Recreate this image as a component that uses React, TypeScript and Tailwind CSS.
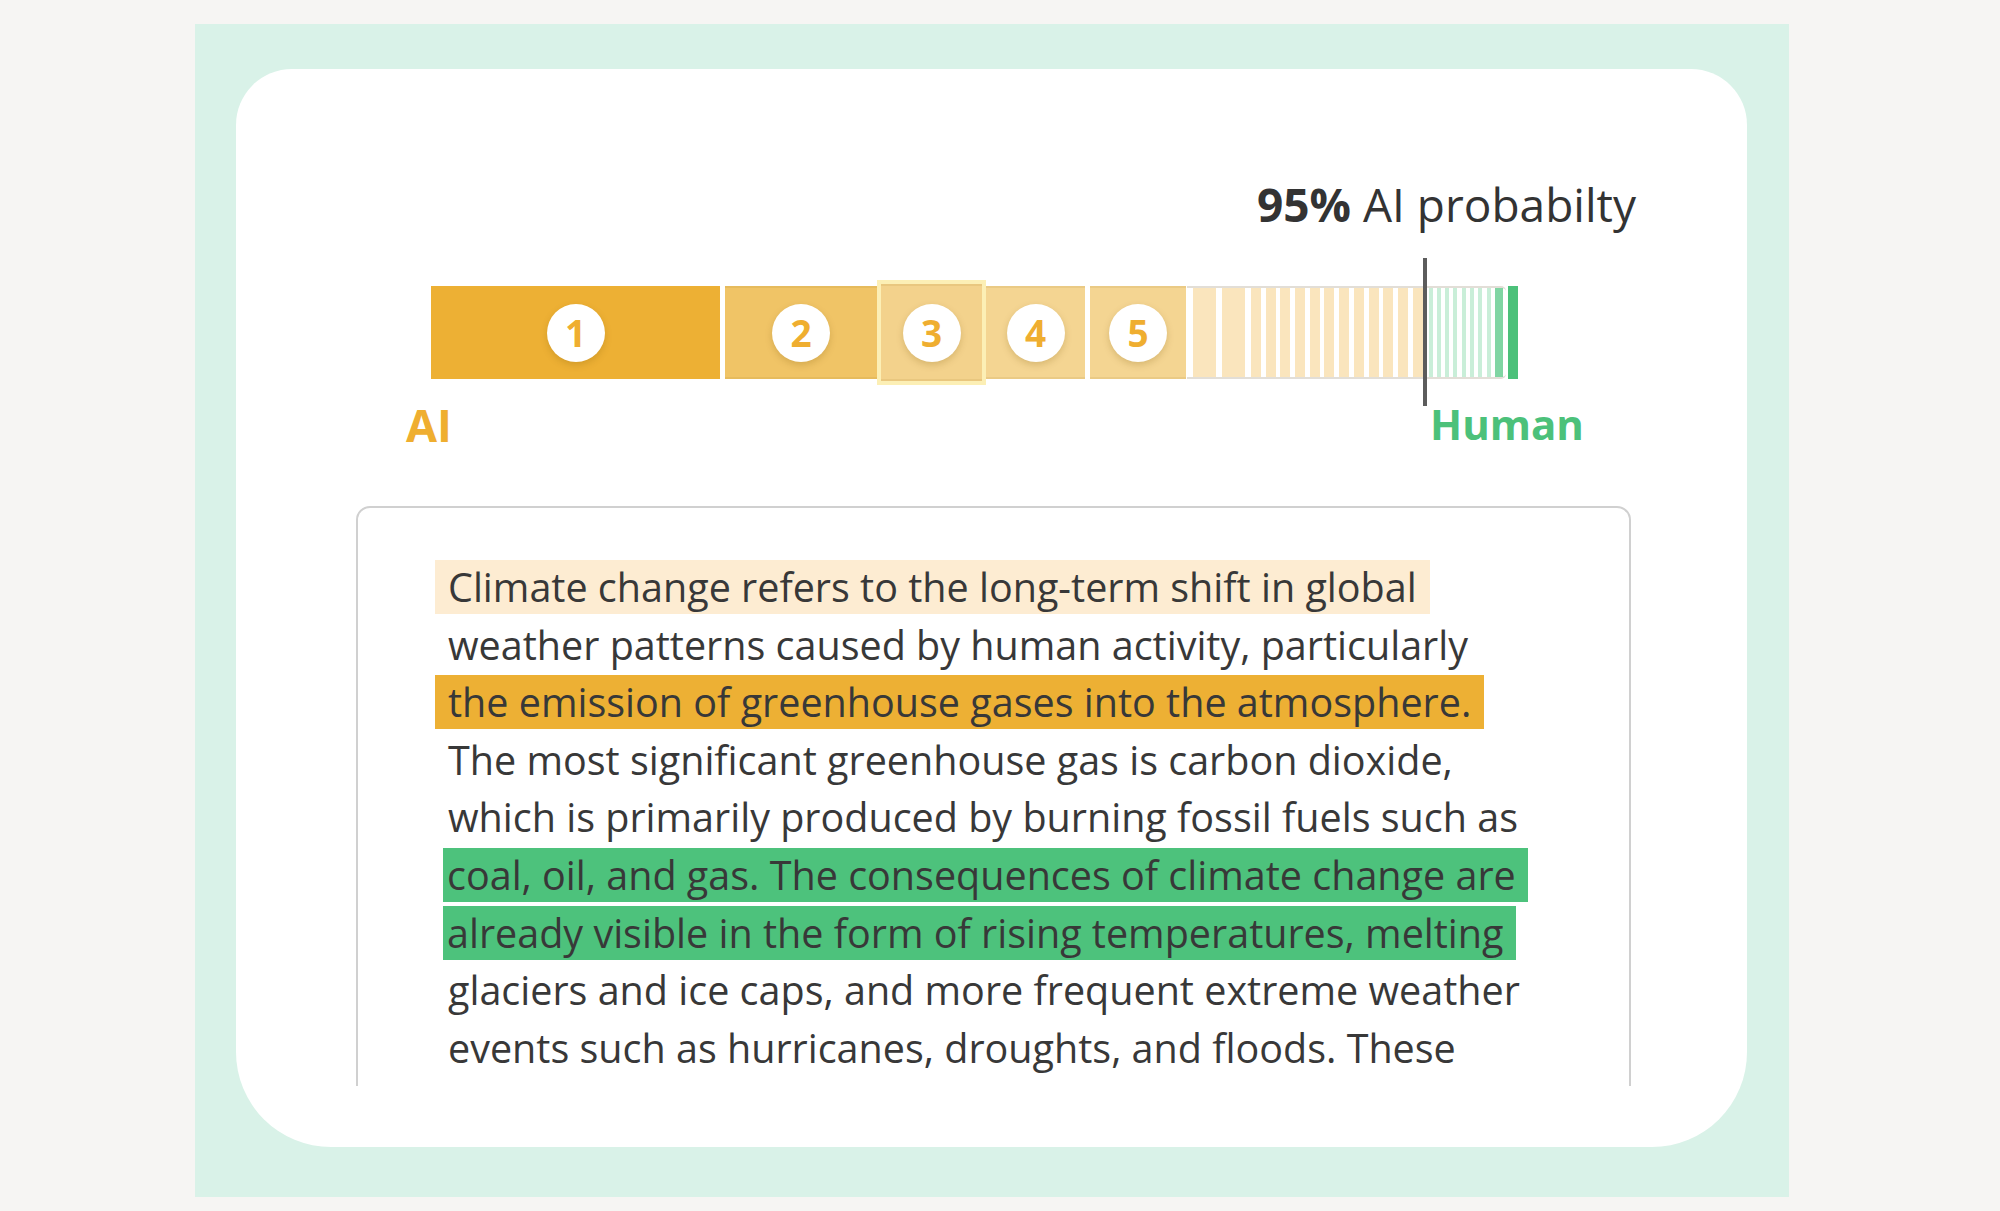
const lines = [
  { text: "Climate change refers to the long-term shift in global", tone: "pale" },
  { text: "weather patterns caused by human activity, particularly", tone: "none" },
  { text: "the emission of greenhouse gases into the atmosphere.", tone: "orange" },
  { text: "The most significant greenhouse gas is carbon dioxide,", tone: "none" },
  { text: "which is primarily produced by burning fossil fuels such as", tone: "none" },
  { text: "coal, oil, and gas. The consequences of climate change are", tone: "green" },
  { text: "already visible in the form of rising temperatures, melting", tone: "green" },
  { text: "glaciers and ice caps, and more frequent extreme weather", tone: "none" },
  { text: "events such as hurricanes, droughts, and floods. These", tone: "none" },
];

const toneClass: Record<string, string> = {
  none: "px-[13px]",
  pale: "px-[13px] bg-[#fdecd2]",
  orange: "px-[13px] bg-[#edb034]",
  green: "ml-[8px] pl-[4px] pr-[12px] bg-[#4dc27c]",
};

function Badge({ n }: { n: number }) {
  return (
    <div className="flex h-[58px] w-[58px] items-center justify-center rounded-full bg-white text-[37px] font-bold leading-none text-[#efae30] shadow-[0_3px_7px_rgba(120,80,0,0.22)]">
      {n}
    </div>
  );
}

const edge = "shadow-[inset_0_2px_0_rgba(150,110,20,0.10),inset_0_-2px_0_rgba(150,110,20,0.10)]";

function ScoreBar() {
  const stripes = Array.from({ length: 12 });
  const greens = Array.from({ length: 8 });
  return (
    <div className="relative ml-[195px] mt-[59px] flex h-[93px] w-fit">
      <div className="flex w-[289px] items-center justify-center bg-[#edb034]">
        <Badge n={1} />
      </div>
      <div className={`ml-[5px] flex w-[152px] items-center justify-center bg-[#f0c466] ${edge}`}>
        <Badge n={2} />
      </div>
      <div className="-my-[6px] flex w-[109px] border-4 border-[#fcefb5] bg-[#fcefb5]">
        <div className={`flex flex-1 items-center justify-center bg-[#f3d28c] ${edge}`}>
          <Badge n={3} />
        </div>
      </div>
      <div className={`flex w-[99px] items-center justify-center bg-[#f4d592] ${edge}`}>
        <Badge n={4} />
      </div>
      <div className={`ml-[5px] flex w-[96px] items-center justify-center bg-[#f4d592] ${edge}`}>
        <Badge n={5} />
      </div>
      <div className="ml-[1px] flex rounded-r-[5px] border-y-2 border-[#e2ded7] bg-white pl-[6px] pr-[3px]">
        <div className="w-[23px] bg-[#fae5bd]" />
        <div className="ml-[6px] w-[23px] bg-[#fae5bd]" />
        <div className="ml-[6px] flex gap-[4.7px]">
          {stripes.map((_, i) => (
            <div key={i} className="w-[10px] bg-[#fae5bd]" />
          ))}
        </div>
        <div className="ml-[6px] flex gap-[4.3px]">
          {greens.map((_, i) => (
            <div key={i} className="w-[4px] bg-[#c9eed8]" />
          ))}
        </div>
        <div className="ml-[4px] w-[8px] bg-[#80d5a3]" />
      </div>
      <div className="ml-[2px] w-[10px] bg-[#4cc17a]" />
      <div className="absolute left-[992px] top-[-28px] h-[148px] w-[4px] bg-[#5c5c5c]" />
    </div>
  );
}

export default function App() {
  return (
    <div
      className="min-h-[1211px] bg-[#f6f5f3] pl-[195px] pt-[24px]"
      style={{ fontFamily: '"Open Sans", "Noto Sans", sans-serif' }}
    >
      <div className="h-[1173px] w-[1594px] bg-[#d9f2e8] pb-[50px] pl-[41px] pr-[42px] pt-[45px]">
        <div className="h-full rounded-b-[95px] rounded-t-[56px] bg-white pt-[112px]">
          <div className="pr-[111px] text-right text-[46px] leading-none text-[#333]">
            <span className="font-bold">95%</span> AI probabilty
          </div>

          <ScoreBar />

          <div className="mt-[23px] flex font-bold leading-none">
            <div className="ml-[170px] w-[1024px] text-[45px] text-[#efae30]">AI</div>
            <div className="pt-[1px] text-[42px] text-[#4cc17a]">Human</div>
          </div>

          <div className="ml-[120px] mt-[59px] h-[580px] w-[1275px] overflow-hidden rounded-t-[14px] border-2 border-b-0 border-[#d0d0d0] pl-[77px] pt-[51px] text-[39.5px] leading-[57.6px] text-[#383838]">
            {lines.map((l) => (
              <div key={l.text}>
                <span className={toneClass[l.tone]}>{l.text}</span>
              </div>
            ))}
          </div>
        </div>
      </div>
    </div>
  );
}
